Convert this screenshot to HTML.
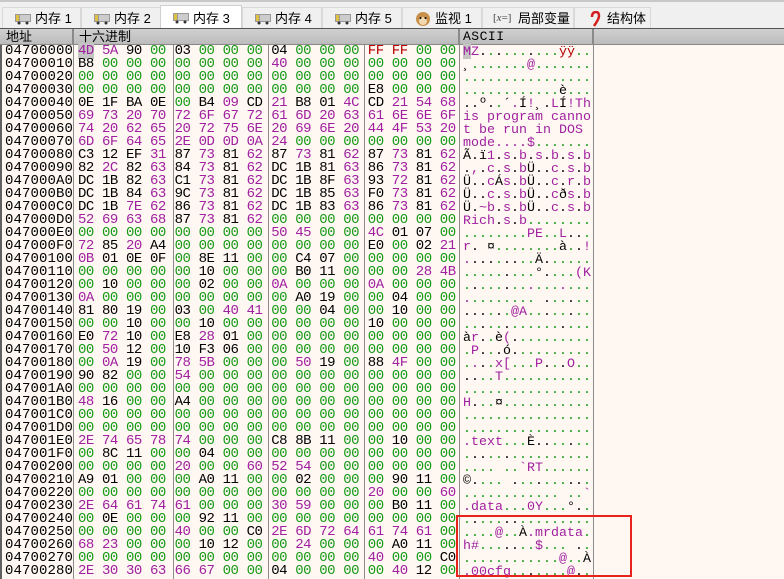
<!DOCTYPE html>
<html><head><meta charset="utf-8">
<style>
*{margin:0;padding:0;box-sizing:border-box}
body{width:784px;height:579px;overflow:hidden;background:#f0f0f0;position:relative;font-family:"Liberation Sans","Noto Sans CJK SC",sans-serif}
.tabs{position:absolute;left:0;top:0;width:784px;height:29px;background:#f0f0f0;border-top:2px solid #c8c8c8}
.tab{position:absolute;top:5px;height:23px;background:#f0f0f0;border:1px solid #d9d9d9;border-bottom:none;font-size:13px;line-height:21px;color:#000;white-space:nowrap}
.tab.act{top:3px;height:26px;background:#fff;border-color:#d0d0d0}
.ic{position:absolute;left:12px;top:5px;width:16px;height:12px}
.tab span{position:absolute;left:32px}
.line{position:absolute;left:0;top:28px;width:784px;height:1px;background:#555}
.hdr{position:absolute;left:0;top:29px;width:784px;height:16px;background:linear-gradient(#d0d0d0,#bcbcbc);border-bottom:1px solid #888;font-size:13px;line-height:15px}
.hdr div{position:absolute;top:0}
.hsep{position:absolute;top:29px;width:2px;height:16px;background:#8a8a8a}
.data{position:absolute;left:0;top:45px;width:784px;height:534px;background:#fff8f2;border-left:2px solid #606060}
.vs{position:absolute;top:45px;width:1px;height:534px;background:#8c8c8c}
.r{position:absolute;left:0;height:13px;width:784px;font-family:"Liberation Mono",monospace}
.r b{position:absolute;left:5px;top:-2px;font-weight:normal;font-size:14px;letter-spacing:0.1px;color:#000}
.r i,.r u{font-style:normal;text-decoration:none;position:absolute;left:0;top:0}
.x{position:absolute;top:-2px;font-size:14px;letter-spacing:-0.5px}
.a{position:absolute;top:-1px;font-size:13.3px}
.g{color:#179a17}.p{color:#a0209f}.k{color:#000}.rd{color:#b40000}
.hl{background:#c4c4c4}
.box{position:absolute;left:456px;top:515px;width:176px;height:62px;border:2px solid #e8231e}
</style></head><body>
<div class="tabs">
<div class="tab" style="left:2px;width:79px"><svg class="ic" viewBox="0 0 16 12"><rect x="0" y="1" width="16" height="8" fill="#999"/><rect x="1" y="2" width="3" height="6" fill="#e0c040"/><rect x="5" y="2" width="10" height="6" fill="#ccc"/><circle cx="4" cy="10" r="1.5" fill="#333"/><circle cx="12" cy="10" r="1.5" fill="#333"/></svg><span>内存 1</span></div>
<div class="tab" style="left:81px;width:80px"><svg class="ic" viewBox="0 0 16 12"><rect x="0" y="1" width="16" height="8" fill="#999"/><rect x="1" y="2" width="3" height="6" fill="#e0c040"/><rect x="5" y="2" width="10" height="6" fill="#ccc"/><circle cx="4" cy="10" r="1.5" fill="#333"/><circle cx="12" cy="10" r="1.5" fill="#333"/></svg><span>内存 2</span></div>
<div class="tab act" style="left:160px;width:82px"><svg class="ic" style="top:6px" viewBox="0 0 16 12"><rect x="0" y="1" width="16" height="8" fill="#999"/><rect x="1" y="2" width="3" height="6" fill="#e0c040"/><rect x="5" y="2" width="10" height="6" fill="#ccc"/><circle cx="4" cy="10" r="1.5" fill="#333"/><circle cx="12" cy="10" r="1.5" fill="#333"/></svg><span style="top:2px">内存 3</span></div>
<div class="tab" style="left:242px;width:80px"><svg class="ic" viewBox="0 0 16 12"><rect x="0" y="1" width="16" height="8" fill="#999"/><rect x="1" y="2" width="3" height="6" fill="#e0c040"/><rect x="5" y="2" width="10" height="6" fill="#ccc"/><circle cx="4" cy="10" r="1.5" fill="#333"/><circle cx="12" cy="10" r="1.5" fill="#333"/></svg><span>内存 4</span></div>
<div class="tab" style="left:322px;width:80px"><svg class="ic" viewBox="0 0 16 12"><rect x="0" y="1" width="16" height="8" fill="#999"/><rect x="1" y="2" width="3" height="6" fill="#e0c040"/><rect x="5" y="2" width="10" height="6" fill="#ccc"/><circle cx="4" cy="10" r="1.5" fill="#333"/><circle cx="12" cy="10" r="1.5" fill="#333"/></svg><span>内存 5</span></div>
<div class="tab" style="left:402px;width:80px"><svg class="ic" style="top:3px;height:15px" viewBox="0 0 16 15"><circle cx="8" cy="8" r="7" fill="#c8904a"/><circle cx="8" cy="10" r="4" fill="#f0d8b0"/><circle cx="5.5" cy="7" r="1" fill="#000"/><circle cx="10.5" cy="7" r="1" fill="#000"/></svg><span>监视 1</span></div>
<div class="tab" style="left:482px;width:92px"><span style="left:10px;font-size:11px;color:#444;font-family:'Liberation Serif',serif">[<i>x</i>=]</span><span style="left:35px">局部变量</span></div>
<div class="tab" style="left:574px;width:77px"><svg class="ic" style="top:3px;height:16px" viewBox="0 0 12 16"><path d="M3 6 Q3 1 7 1 Q10 1 10 5 Q10 8 5 15" stroke="#d42020" stroke-width="2.5" fill="none"/></svg><span>结构体</span></div>
</div>
<div class="line"></div>
<div class="hdr"><div style="left:6px">地址</div><div style="left:79px">十六进制</div><div style="left:463px;font-family:'Liberation Mono',monospace;letter-spacing:0.5px">ASCII</div></div>
<div class="hsep" style="left:72px"></div><div class="hsep" style="left:458px"></div><div class="hsep" style="left:592px"></div>
<div class="data"></div>
<div class="vs" style="left:73px"></div><div class="vs" style="left:173px"></div><div class="vs" style="left:268px"></div><div class="vs" style="left:364px"></div><div class="vs" style="left:459px"></div><div class="vs" style="left:593px"></div>
<div id="rows">
<div class="r"><b>04700000</b><i>4D 5A 90 00 03 00 00 00 04 00 00 00 FF FF 00 00</i><u>MZ..........ÿÿ..</u></div>
<div class="r"><b>04700010</b><i>B8 00 00 00 00 00 00 00 40 00 00 00 00 00 00 00</i><u>¸.......@.......</u></div>
<div class="r"><b>04700020</b><i>00 00 00 00 00 00 00 00 00 00 00 00 00 00 00 00</i><u>................</u></div>
<div class="r"><b>04700030</b><i>00 00 00 00 00 00 00 00 00 00 00 00 E8 00 00 00</i><u>............è...</u></div>
<div class="r"><b>04700040</b><i>0E 1F BA 0E 00 B4 09 CD 21 B8 01 4C CD 21 54 68</i><u>..º..´.Í!¸.LÍ!Th</u></div>
<div class="r"><b>04700050</b><i>69 73 20 70 72 6F 67 72 61 6D 20 63 61 6E 6E 6F</i><u>is program canno</u></div>
<div class="r"><b>04700060</b><i>74 20 62 65 20 72 75 6E 20 69 6E 20 44 4F 53 20</i><u>t be run in DOS </u></div>
<div class="r"><b>04700070</b><i>6D 6F 64 65 2E 0D 0D 0A 24 00 00 00 00 00 00 00</i><u>mode....$.......</u></div>
<div class="r"><b>04700080</b><i>C3 12 EF 31 87 73 81 62 87 73 81 62 87 73 81 62</i><u>Ã.ï1.s.b.s.b.s.b</u></div>
<div class="r"><b>04700090</b><i>82 2C 82 63 84 73 81 62 DC 1B 81 63 86 73 81 62</i><u>.,.c.s.bÜ..c.s.b</u></div>
<div class="r"><b>047000A0</b><i>DC 1B 82 63 C1 73 81 62 DC 1B 8F 63 93 72 81 62</i><u>Ü..cÁs.bÜ..c.r.b</u></div>
<div class="r"><b>047000B0</b><i>DC 1B 84 63 9C 73 81 62 DC 1B 85 63 F0 73 81 62</i><u>Ü..c.s.bÜ..cðs.b</u></div>
<div class="r"><b>047000C0</b><i>DC 1B 7E 62 86 73 81 62 DC 1B 83 63 86 73 81 62</i><u>Ü.~b.s.bÜ..c.s.b</u></div>
<div class="r"><b>047000D0</b><i>52 69 63 68 87 73 81 62 00 00 00 00 00 00 00 00</i><u>Rich.s.b........</u></div>
<div class="r"><b>047000E0</b><i>00 00 00 00 00 00 00 00 50 45 00 00 4C 01 07 00</i><u>........PE..L...</u></div>
<div class="r"><b>047000F0</b><i>72 85 20 A4 00 00 00 00 00 00 00 00 E0 00 02 21</i><u>r. ¤........à..!</u></div>
<div class="r"><b>04700100</b><i>0B 01 0E 0F 00 8E 11 00 00 C4 07 00 00 00 00 00</i><u>.........Ä......</u></div>
<div class="r"><b>04700110</b><i>00 00 00 00 00 10 00 00 00 B0 11 00 00 00 28 4B</i><u>.........°....(K</u></div>
<div class="r"><b>04700120</b><i>00 10 00 00 00 02 00 00 0A 00 00 00 0A 00 00 00</i><u>................</u></div>
<div class="r"><b>04700130</b><i>0A 00 00 00 00 00 00 00 00 A0 19 00 00 04 00 00</i><u>......... ......</u></div>
<div class="r"><b>04700140</b><i>81 80 19 00 03 00 40 41 00 00 04 00 00 10 00 00</i><u>......@A........</u></div>
<div class="r"><b>04700150</b><i>00 00 10 00 00 10 00 00 00 00 00 00 10 00 00 00</i><u>................</u></div>
<div class="r"><b>04700160</b><i>E0 72 10 00 E8 28 01 00 00 00 00 00 00 00 00 00</i><u>àr..è(..........</u></div>
<div class="r"><b>04700170</b><i>00 50 12 00 10 F3 06 00 00 00 00 00 00 00 00 00</i><u>.P...ó..........</u></div>
<div class="r"><b>04700180</b><i>00 0A 19 00 78 5B 00 00 00 50 19 00 88 4F 00 00</i><u>....x[...P...O..</u></div>
<div class="r"><b>04700190</b><i>90 82 00 00 54 00 00 00 00 00 00 00 00 00 00 00</i><u>....T...........</u></div>
<div class="r"><b>047001A0</b><i>00 00 00 00 00 00 00 00 00 00 00 00 00 00 00 00</i><u>................</u></div>
<div class="r"><b>047001B0</b><i>48 16 00 00 A4 00 00 00 00 00 00 00 00 00 00 00</i><u>H...¤...........</u></div>
<div class="r"><b>047001C0</b><i>00 00 00 00 00 00 00 00 00 00 00 00 00 00 00 00</i><u>................</u></div>
<div class="r"><b>047001D0</b><i>00 00 00 00 00 00 00 00 00 00 00 00 00 00 00 00</i><u>................</u></div>
<div class="r"><b>047001E0</b><i>2E 74 65 78 74 00 00 00 C8 8B 11 00 00 10 00 00</i><u>.text...È.......</u></div>
<div class="r"><b>047001F0</b><i>00 8C 11 00 00 04 00 00 00 00 00 00 00 00 00 00</i><u>................</u></div>
<div class="r"><b>04700200</b><i>00 00 00 00 20 00 00 60 52 54 00 00 00 00 00 00</i><u>.... ..`RT......</u></div>
<div class="r"><b>04700210</b><i>A9 01 00 00 00 A0 11 00 00 02 00 00 00 90 11 00</i><u>©.... ..........</u></div>
<div class="r"><b>04700220</b><i>00 00 00 00 00 00 00 00 00 00 00 00 20 00 00 60</i><u>............ ..`</u></div>
<div class="r"><b>04700230</b><i>2E 64 61 74 61 00 00 00 30 59 00 00 00 B0 11 00</i><u>.data...0Y...°..</u></div>
<div class="r"><b>04700240</b><i>00 0E 00 00 00 92 11 00 00 00 00 00 00 00 00 00</i><u>................</u></div>
<div class="r"><b>04700250</b><i>00 00 00 00 40 00 00 C0 2E 6D 72 64 61 74 61 00</i><u>....@..À.mrdata.</u></div>
<div class="r"><b>04700260</b><i>68 23 00 00 00 10 12 00 00 24 00 00 00 A0 11 00</i><u>h#.......$... ..</u></div>
<div class="r"><b>04700270</b><i>00 00 00 00 00 00 00 00 00 00 00 00 40 00 00 C0</i><u>............@..À</u></div>
<div class="r"><b>04700280</b><i>2E 30 30 63 66 67 00 00 04 00 00 00 00 40 12 00</i><u>.00cfg.......@..</u></div>
</div>
<div class="box"></div>
<script>
function cls(v){if(v===0)return 'g';if(v===255)return 'rd';if((v>=0x20&&v<0x7f)||v===9||v===10||v===11||v===13)return 'p';return 'k';}
var rows=document.querySelectorAll('#rows .r');
rows.forEach(function(r,n){
 r.style.top=(45+n*13)+'px';
 var i=r.querySelector('i'),u=r.querySelector('u');
 var bytes=i.textContent.trim().split(/\s+/);
 var chars=Array.from(u.textContent);
 var hh='',ah='';
 bytes.forEach(function(b,k){
  var v=parseInt(b,16),c=cls(v);
  var x=78+Math.floor(k/4)*96.6+(k%4)*24;
  var hl=(n===0&&k===0)?' hl':'';
  hh+='<span class="x '+c+hl+'" style="left:'+x.toFixed(1)+'px">'+b+'</span>';
  var ch=chars[k]||'.';
  ah+='<span class="a '+c+hl+'" style="left:'+(463+k*8)+'px">'+(ch===' '?'&nbsp;':ch)+'</span>';
 });
 i.innerHTML=hh;u.innerHTML=ah;
});
</script>
</body></html>
